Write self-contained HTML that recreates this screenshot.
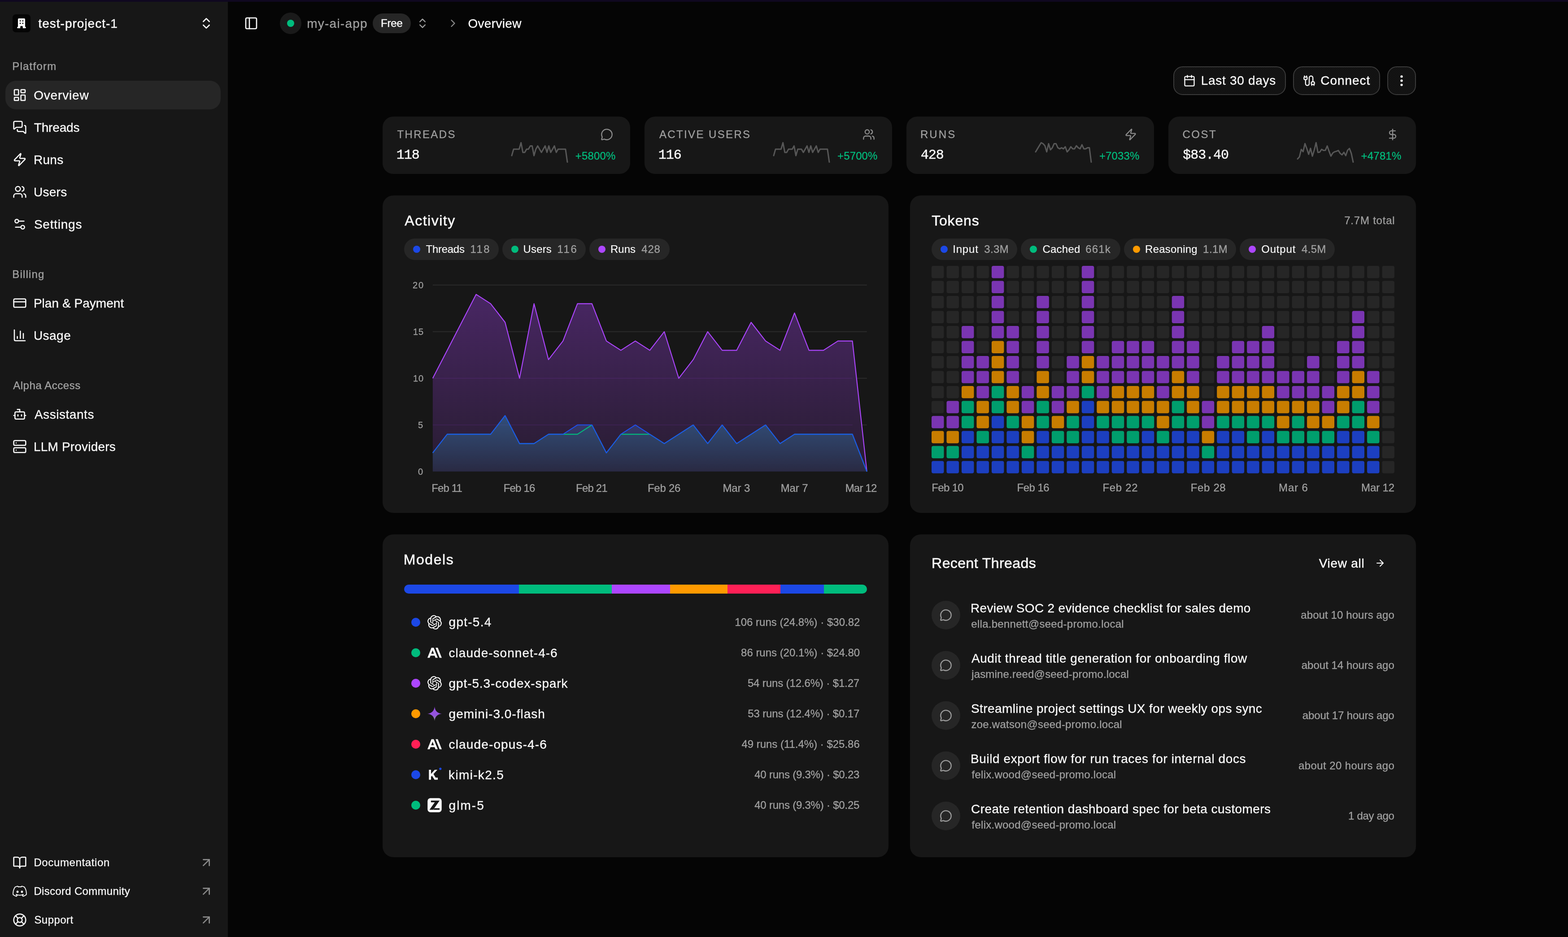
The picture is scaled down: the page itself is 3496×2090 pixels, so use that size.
<!DOCTYPE html><html lang="en"><head><meta charset="utf-8"><title>Overview</title><style>
*{box-sizing:border-box;margin:0;padding:0}
html,body{width:3496px;height:2090px;overflow:hidden;background:#050505}
body{font-family:"Liberation Sans",sans-serif;color:#fafafa;-webkit-font-smoothing:antialiased}
#root{position:absolute;left:0;top:0;width:1748px;height:1045px;zoom:2;overflow:hidden;will-change:transform}
@media (max-width:2400px){html,body{width:1748px;height:1045px}#root{zoom:1}}
.abs{position:absolute}
.ic{display:block;flex:none}
.strip{position:absolute;left:0;top:0;width:1748px;height:2px;background:#0f0820;z-index:5}
.sb{position:absolute;left:0;top:0;width:254px;height:1045px;background:#171717}
.t{position:absolute;white-space:pre;line-height:1}
.c{transform:translateY(-50%)}
.nav{position:absolute;left:6px;width:240px;height:32px;border-radius:12px}
.nav.on{background:#262626}
.card{position:absolute;background:#171717;border-radius:12px}
.btn{position:absolute;top:74.1px;height:31.900px;border:1px solid #3a3a3a;background-color:#171717;border-radius:10.5px;background-image:radial-gradient(circle at .5px .5px,rgba(0,0,0,.5) .3px,transparent .55px),radial-gradient(circle at 1.5px 1.5px,rgba(0,0,0,.5) .3px,transparent .55px);background-size:2px 2px}
.pill{position:absolute;height:24px;border-radius:12px;background:#262626}
.dot{position:absolute;border-radius:50%}
.av{position:absolute;width:32px;height:32px;border-radius:50%;background:#262626}
</style></head><body><div id="root"><div class="strip"></div><aside class="sb"><div class="abs" style="left:14px;top:16px;width:20px;height:20px;border-radius:3.600px;background:#050505"><svg class="ic" width="20" height="20" viewBox="0 0 20 20"><path fill="#fafafa" fill-rule="evenodd" d="M7.100 4.500h5.800a1.100 1.100 0 0 1 1.100 1.100v8.300h.1a.8.800 0 0 1 0 1.650h-2.700v-1.700a.9.900 0 0 0-.9-.9h-1a.9.900 0 0 0-.9.900v1.700H5.900a.8.800 0 0 1 0-1.650H6V5.600a1.100 1.100 0 0 1 1.100-1.100ZM8.200 6.600a.3.300 0 0 0-.3.300v.65a.3.300 0 0 0 .3.300h.75a.3.300 0 0 0 .3-.3V6.900a.3.300 0 0 0-.3-.3Zm2.850 0a.3.300 0 0 0-.3.300v.65a.3.300 0 0 0 .3.300h.75a.3.300 0 0 0 .3-.3V6.900a.3.300 0 0 0-.3-.3ZM8.200 9.400a.3.300 0 0 0-.3.300v.65a.3.300 0 0 0 .3.300h.75a.3.300 0 0 0 .3-.3V9.700a.3.300 0 0 0-.3-.3Zm2.850 0a.3.300 0 0 0-.3.300v.65a.3.300 0 0 0 .3.300h.75a.3.300 0 0 0 .3-.3V9.700a.3.300 0 0 0-.3-.3Z"/></svg></div><div class="t c" style="left:42.70px;top:26.40px;font-size:14px;letter-spacing:0.504px;-webkit-text-stroke:0.25px #fafafa;">test-project-1</div><div class="abs" style="left:222.20px;top:18.00px;"><svg class="ic" width="16" height="16" viewBox="0 0 24 24" fill="none" stroke="currentColor" stroke-width="2" stroke-linecap="round" stroke-linejoin="round" style=""><path d="m7 15 5 5 5-5"/><path d="m7 9 5-5 5 5"/></svg></div><div class="t c" style="left:13.60px;top:74.20px;font-size:12px;letter-spacing:0.621px;color:#a1a1a1;-webkit-text-stroke:0.2px #a1a1a1;">Platform</div><div class="nav on" style="top:90px"><div class="abs" style="left:8.00px;top:8.00px;"><svg class="ic" width="16" height="16" viewBox="0 0 24 24" fill="none" stroke="currentColor" stroke-width="1.9" stroke-linecap="round" stroke-linejoin="round" style=""><rect width="7" height="9" x="3" y="3" rx="1"/><rect width="7" height="5" x="14" y="3" rx="1"/><rect width="7" height="9" x="14" y="12" rx="1"/><rect width="7" height="5" x="3" y="16" rx="1"/></svg></div><span class="t c" style="left:31.60px;top:16.30px;font-size:14px;letter-spacing:0.414px;-webkit-text-stroke:0.15px #fafafa;">Overview</span></div><div class="nav" style="top:126px"><div class="abs" style="left:8.00px;top:8.00px;"><svg class="ic" width="16" height="16" viewBox="0 0 24 24" fill="none" stroke="currentColor" stroke-width="1.9" stroke-linecap="round" stroke-linejoin="round" style=""><path d="M16 10a2 2 0 0 1-2 2H6.828a2 2 0 0 0-1.414.586l-2.202 2.202A.71.71 0 0 1 2 14.286V4a2 2 0 0 1 2-2h10a2 2 0 0 1 2 2z"/><path d="M20 9a2 2 0 0 1 2 2v10.286a.71.71 0 0 1-1.212.502l-2.202-2.202A2 2 0 0 0 17.172 19H10a2 2 0 0 1-2-2v-1"/></svg></div><span class="t c" style="left:31.85px;top:16.30px;font-size:14px;letter-spacing:-0.075px;-webkit-text-stroke:0.15px #fafafa;">Threads</span></div><div class="nav" style="top:162px"><div class="abs" style="left:8.00px;top:8.00px;"><svg class="ic" width="16" height="16" viewBox="0 0 24 24" fill="none" stroke="currentColor" stroke-width="1.9" stroke-linecap="round" stroke-linejoin="round" style=""><path d="M4 14a1 1 0 0 1-.78-1.63l9.9-10.2a.5.5 0 0 1 .86.46l-1.92 6.02A1 1 0 0 0 13 10h7a1 1 0 0 1 .78 1.63l-9.9 10.2a.5.5 0 0 1-.86-.46l1.92-6.02A1 1 0 0 0 11 14z"/></svg></div><span class="t c" style="left:31.45px;top:16.30px;font-size:14px;letter-spacing:0.167px;-webkit-text-stroke:0.15px #fafafa;">Runs</span></div><div class="nav" style="top:198px"><div class="abs" style="left:8.00px;top:8.00px;"><svg class="ic" width="16" height="16" viewBox="0 0 24 24" fill="none" stroke="currentColor" stroke-width="1.9" stroke-linecap="round" stroke-linejoin="round" style=""><path d="M16 21v-2a4 4 0 0 0-4-4H6a4 4 0 0 0-4 4v2"/><circle cx="9" cy="7" r="4"/><path d="M22 21v-2a4 4 0 0 0-3-3.87"/><path d="M16 3.13a4 4 0 0 1 0 7.75"/></svg></div><span class="t c" style="left:31.45px;top:16.30px;font-size:14px;letter-spacing:0.150px;-webkit-text-stroke:0.15px #fafafa;">Users</span></div><div class="nav" style="top:234px"><div class="abs" style="left:8.00px;top:8.00px;"><svg class="ic" width="16" height="16" viewBox="0 0 24 24" fill="none" stroke="currentColor" stroke-width="1.9" stroke-linecap="round" stroke-linejoin="round" style=""><path d="M19 7h-9"/><path d="M14 17H5"/><circle cx="17" cy="17" r="3"/><circle cx="7" cy="7" r="3"/></svg></div><span class="t c" style="left:31.95px;top:16.30px;font-size:14px;letter-spacing:0.386px;-webkit-text-stroke:0.15px #fafafa;">Settings</span></div><div class="t c" style="left:13.60px;top:306.20px;font-size:12px;letter-spacing:0.600px;color:#a1a1a1;-webkit-text-stroke:0.2px #a1a1a1;">Billing</div><div class="nav" style="top:322px"><div class="abs" style="left:8.00px;top:8.00px;"><svg class="ic" width="16" height="16" viewBox="0 0 24 24" fill="none" stroke="currentColor" stroke-width="1.9" stroke-linecap="round" stroke-linejoin="round" style=""><rect width="20" height="14" x="2" y="5" rx="2"/><line x1="2" x2="22" y1="10" y2="10"/></svg></div><span class="t c" style="left:31.45px;top:16.30px;font-size:14px;letter-spacing:0.019px;-webkit-text-stroke:0.15px #fafafa;">Plan &amp; Payment</span></div><div class="nav" style="top:358px"><div class="abs" style="left:8.00px;top:8.00px;"><svg class="ic" width="16" height="16" viewBox="0 0 24 24" fill="none" stroke="currentColor" stroke-width="1.9" stroke-linecap="round" stroke-linejoin="round" style=""><path d="M3 3v16a2 2 0 0 0 2 2h16"/><path d="M18 17V9"/><path d="M13 17V5"/><path d="M8 17v-3"/></svg></div><span class="t c" style="left:31.45px;top:16.30px;font-size:14px;letter-spacing:0.238px;-webkit-text-stroke:0.15px #fafafa;">Usage</span></div><div class="t c" style="left:14.60px;top:430.20px;font-size:12px;letter-spacing:0.273px;color:#a1a1a1;-webkit-text-stroke:0.2px #a1a1a1;">Alpha Access</div><div class="nav" style="top:446px"><div class="abs" style="left:8.00px;top:8.00px;"><svg class="ic" width="16" height="16" viewBox="0 0 24 24" fill="none" stroke="currentColor" stroke-width="1.9" stroke-linecap="round" stroke-linejoin="round" style=""><path d="M12 8V4H8"/><rect width="16" height="12" x="4" y="8" rx="2"/><path d="M2 14h2"/><path d="M20 14h2"/><path d="M15 13v2"/><path d="M9 13v2"/></svg></div><span class="t c" style="left:32.45px;top:16.30px;font-size:14px;letter-spacing:0.272px;-webkit-text-stroke:0.15px #fafafa;">Assistants</span></div><div class="nav" style="top:482px"><div class="abs" style="left:8.00px;top:8.00px;"><svg class="ic" width="16" height="16" viewBox="0 0 24 24" fill="none" stroke="currentColor" stroke-width="1.9" stroke-linecap="round" stroke-linejoin="round" style=""><rect width="20" height="8" x="2" y="2" rx="2" ry="2"/><rect width="20" height="8" x="2" y="14" rx="2" ry="2"/><line x1="6" x2="6.01" y1="6" y2="6"/><line x1="6" x2="6.01" y1="18" y2="18"/></svg></div><span class="t c" style="left:31.45px;top:16.30px;font-size:14px;letter-spacing:0.096px;-webkit-text-stroke:0.15px #fafafa;">LLM Providers</span></div><div class="nav" style="top:946.2px"><div class="abs" style="left:8.00px;top:8.00px;"><svg class="ic" width="16" height="16" viewBox="0 0 24 24" fill="none" stroke="currentColor" stroke-width="1.9" stroke-linecap="round" stroke-linejoin="round" style=""><path d="M12 7v14"/><path d="M3 18a1 1 0 0 1-1-1V4a1 1 0 0 1 1-1h5a4 4 0 0 1 4 4 4 4 0 0 1 4-4h5a1 1 0 0 1 1 1v13a1 1 0 0 1-1 1h-6a3 3 0 0 0-3 3 3 3 0 0 0-3-3z"/></svg></div><span class="t c" style="left:31.70px;top:15.70px;font-size:12px;letter-spacing:0.312px;-webkit-text-stroke:0.15px #fafafa;">Documentation</span><div class="abs" style="left:216.20px;top:7.90px;color:#8a8a8a;"><svg class="ic" width="16" height="16" viewBox="0 0 24 24" fill="none" stroke="currentColor" stroke-width="2" stroke-linecap="round" stroke-linejoin="round" style=""><path d="M7 7h10v10"/><path d="M7 17 17 7"/></svg></div></div><div class="nav" style="top:978.2px"><div class="abs" style="left:8.00px;top:8.00px;"><svg class="ic" width="16" height="16" viewBox="0 0 24 24" fill="none" stroke="currentColor" stroke-width="1.9" stroke-linecap="round" stroke-linejoin="round" style=""><g transform="translate(12 12) scale(.93) translate(-12 -12)"><path stroke-width="1.500" d="M20.317 4.3698a19.7913 19.7913 0 00-4.8851-1.5152.0741.0741 0 00-.0785.0371c-.211.3753-.4447.8648-.6083 1.2495-1.8447-.2762-3.68-.2762-5.4868 0-.1636-.3933-.4058-.8742-.6177-1.2495a.077.077 0 00-.0785-.037 19.7363 19.7363 0 00-4.8852 1.515.0699.0699 0 00-.0321.0277C.5334 9.0458-.319 13.5799.0992 18.0578a.0824.0824 0 00.0312.0561c2.0528 1.5076 4.0413 2.4228 5.9929 3.0294a.0777.0777 0 00.0842-.0276c.4616-.6304.8731-1.2952 1.226-1.9942a.076.076 0 00-.0416-.1057c-.6528-.2476-1.2743-.5495-1.8722-.8923a.077.077 0 01-.0076-.1277c.1258-.0943.2517-.1923.3718-.2914a.0743.0743 0 01.0776-.0105c3.9278 1.7933 8.18 1.7933 12.0614 0a.0739.0739 0 01.0785.0095c.1202.099.246.1981.3728.2924a.077.077 0 01-.0066.1276 12.2986 12.2986 0 01-1.873.8914.0766.0766 0 00-.0407.1067c.3604.698.7719 1.3628 1.225 1.9932a.076.076 0 00.0842.0286c1.961-.6067 3.9495-1.5219 6.0023-3.0294a.077.077 0 00.0313-.0552c.5004-5.177-.8382-9.6739-3.5485-13.6604a.061.061 0 00-.0312-.0286z"/><ellipse cx="8.020" cy="12.900" rx="1.900" ry="2.100" fill="currentColor" stroke="none"/><ellipse cx="15.980" cy="12.900" rx="1.900" ry="2.100" fill="currentColor" stroke="none"/></g></svg></div><span class="t c" style="left:31.70px;top:15.70px;font-size:12px;letter-spacing:0.156px;-webkit-text-stroke:0.15px #fafafa;">Discord Community</span><div class="abs" style="left:216.20px;top:7.90px;color:#8a8a8a;"><svg class="ic" width="16" height="16" viewBox="0 0 24 24" fill="none" stroke="currentColor" stroke-width="2" stroke-linecap="round" stroke-linejoin="round" style=""><path d="M7 7h10v10"/><path d="M7 17 17 7"/></svg></div></div><div class="nav" style="top:1010.2px"><div class="abs" style="left:8.00px;top:8.00px;"><svg class="ic" width="16" height="16" viewBox="0 0 24 24" fill="none" stroke="currentColor" stroke-width="1.9" stroke-linecap="round" stroke-linejoin="round" style=""><circle cx="12" cy="12" r="10"/><path d="m4.93 4.93 4.24 4.24"/><path d="m14.83 9.17 4.24-4.24"/><path d="m14.83 14.83 4.24 4.24"/><path d="m9.17 14.83-4.24 4.24"/><circle cx="12" cy="12" r="4"/></svg></div><span class="t c" style="left:32.20px;top:15.70px;font-size:12px;letter-spacing:0.225px;-webkit-text-stroke:0.15px #fafafa;">Support</span><div class="abs" style="left:216.20px;top:7.90px;color:#8a8a8a;"><svg class="ic" width="16" height="16" viewBox="0 0 24 24" fill="none" stroke="currentColor" stroke-width="2" stroke-linecap="round" stroke-linejoin="round" style=""><path d="M7 7h10v10"/><path d="M7 17 17 7"/></svg></div></div></aside><div class="abs" style="left:272.00px;top:18.00px;"><svg class="ic" width="16" height="16" viewBox="0 0 24 24" fill="none" stroke="currentColor" stroke-width="2" stroke-linecap="round" stroke-linejoin="round" style=""><rect width="18" height="18" x="3" y="3" rx="2"/><path d="M9 3v18"/></svg></div><div class="abs" style="left:312px;top:14px;width:24px;height:24px;border-radius:50%;background:#1a1a1a"><div class="dot" style="left:8px;top:8px;width:8px;height:8px;background:#00bc7d"></div></div><div class="t c" style="left:342.15px;top:26.40px;font-size:14px;letter-spacing:0.613px;color:#a1a1a1;-webkit-text-stroke:0.15px #a1a1a1;">my-ai-app</div><div class="abs" style="left:415.5px;top:15px;width:42.5px;height:22px;border-radius:11px;background:#262626"><div class="t c" style="left:8.95px;top:11.20px;font-size:12px;letter-spacing:-0.083px;-webkit-text-stroke:0.22px #fafafa;">Free</div></div><div class="abs" style="left:464.00px;top:19.00px;color:#a1a1a1;"><svg class="ic" width="14" height="14" viewBox="0 0 24 24" fill="none" stroke="currentColor" stroke-width="2" stroke-linecap="round" stroke-linejoin="round" style=""><path d="m7 15 5 5 5-5"/><path d="m7 9 5-5 5 5"/></svg></div><div class="abs" style="left:498.00px;top:19.00px;color:#8a8a8a;"><svg class="ic" width="14" height="14" viewBox="0 0 24 24" fill="none" stroke="currentColor" stroke-width="2" stroke-linecap="round" stroke-linejoin="round" style=""><path d="m9 18 6-6-6-6"/></svg></div><div class="t c" style="left:521.70px;top:26.40px;font-size:14px;letter-spacing:0.171px;-webkit-text-stroke:0.15px #fafafa;">Overview</div><div class="btn" style="left:1308px;width:125.4px"><div class="abs" style="left:9.90px;top:7.80px;"><svg class="ic" width="14" height="14" viewBox="0 0 24 24" fill="none" stroke="currentColor" stroke-width="2" stroke-linecap="round" stroke-linejoin="round" style=""><path d="M8 2v4"/><path d="M16 2v4"/><rect width="18" height="18" x="3" y="4" rx="2"/><path d="M3 10h18"/></svg></div><div class="t c" style="left:29.90px;top:15.00px;font-size:14px;letter-spacing:0.350px;-webkit-text-stroke:0.15px #fafafa;">Last 30 days</div></div><div class="btn" style="left:1441.7px;width:96.6px"><div class="abs" style="left:9.70px;top:7.80px;"><svg class="ic" width="14" height="14" viewBox="0 0 24 24" fill="none" stroke="currentColor" stroke-width="2" stroke-linecap="round" stroke-linejoin="round" style=""><path d="M17 19a1 1 0 0 1-1-1v-2a2 2 0 0 1 2-2h2a2 2 0 0 1 2 2v2a1 1 0 0 1-1 1z"/><path d="M17 21v-2"/><path d="M19 14V6.5a1 1 0 0 0-7 0v11a1 1 0 0 1-7 0V10"/><path d="M21 21v-2"/><path d="M3 5V3"/><path d="M4 10a2 2 0 0 1-2-2V6a1 1 0 0 1 1-1h4a1 1 0 0 1 1 1v2a2 2 0 0 1-2 2z"/><path d="M7 5V3"/></svg></div><div class="t c" style="left:29.45px;top:15.00px;font-size:14px;letter-spacing:0.467px;-webkit-text-stroke:0.22px #fafafa;">Connect</div></div><div class="btn" style="left:1546.5px;width:32px"><div class="abs" style="left:6.85px;top:6.80px;"><svg class="ic" width="16" height="16" viewBox="0 0 24 24" fill="none" stroke="currentColor" stroke-width="2" stroke-linecap="round" stroke-linejoin="round" style=""><circle cx="12" cy="12" r="1"/><circle cx="12" cy="5" r="1"/><circle cx="12" cy="19" r="1"/></svg></div></div><div class="card" style="left:426.5px;top:130px;width:276px;height:64px"><div class="t c" style="left:16.20px;top:20.00px;font-size:12px;letter-spacing:1.200px;color:#a1a1a1;-webkit-text-stroke:0.15px #a1a1a1;">THREADS</div><div class="t c" style="left:15.40px;top:43.10px;font-size:15px;letter-spacing:-0.525px;font-family:'Liberation Mono',monospace;-webkit-text-stroke:0.2px #fafafa;">118</div><svg class="abs" style="left:143.2px;top:28px" width="64" height="24" viewBox="0 0 64 24"><polyline fill="none" stroke="#575757" stroke-width="1.500" stroke-linejoin="round" stroke-linecap="round" points="1.00,15.57 3.07,8.33 5.13,8.33 7.20,8.33 9.27,8.33 11.33,1.10 13.40,11.95 15.47,11.95 17.53,8.33 19.60,8.33 21.67,4.72 23.73,4.72 25.80,15.57 27.87,8.33 29.93,4.72 32.00,8.33 34.07,11.95 36.13,8.33 38.20,4.72 40.27,11.95 42.33,4.72 44.40,11.95 46.47,8.33 48.53,4.72 50.60,11.95 52.67,8.33 54.73,8.33 56.80,8.33 58.87,8.33 60.93,8.33 63.00,22.80"/></svg><div class="t c" style="left:214.85px;top:44.00px;font-size:12px;letter-spacing:0.100px;color:#00bc7d;-webkit-text-stroke:0.15px #00bc7d;">+5800%</div><div class="abs" style="left:242.80px;top:13.10px;color:#8c8c8c;"><svg class="ic" width="14" height="14" viewBox="0 0 24 24" fill="none" stroke="currentColor" stroke-width="2" stroke-linecap="round" stroke-linejoin="round" style=""><path d="M2.992 16.342a2 2 0 0 1 .094 1.167l-1.065 3.29a1 1 0 0 0 1.236 1.168l3.413-.998a2 2 0 0 1 1.099.092 10 10 0 1 0-4.777-4.719"/></svg></div></div><div class="card" style="left:718.5px;top:130px;width:276px;height:64px"><div class="t c" style="left:16.45px;top:20.00px;font-size:12px;letter-spacing:1.191px;color:#a1a1a1;-webkit-text-stroke:0.15px #a1a1a1;">ACTIVE USERS</div><div class="t c" style="left:15.40px;top:43.10px;font-size:15px;letter-spacing:-0.525px;font-family:'Liberation Mono',monospace;-webkit-text-stroke:0.2px #fafafa;">116</div><svg class="abs" style="left:143.2px;top:28px" width="64" height="24" viewBox="0 0 64 24"><polyline fill="none" stroke="#575757" stroke-width="1.500" stroke-linejoin="round" stroke-linecap="round" points="1.00,15.57 3.07,8.33 5.13,8.33 7.20,8.33 9.27,8.33 11.33,1.10 13.40,11.95 15.47,11.95 17.53,8.33 19.60,8.33 21.67,8.33 23.73,4.72 25.80,15.57 27.87,8.33 29.93,8.33 32.00,8.33 34.07,11.95 36.13,8.33 38.20,4.72 40.27,11.95 42.33,4.72 44.40,11.95 46.47,8.33 48.53,4.72 50.60,11.95 52.67,8.33 54.73,8.33 56.80,8.33 58.87,8.33 60.93,8.33 63.00,22.80"/></svg><div class="t c" style="left:215.00px;top:44.00px;font-size:12px;letter-spacing:0.070px;color:#00bc7d;-webkit-text-stroke:0.15px #00bc7d;">+5700%</div><div class="abs" style="left:242.80px;top:13.10px;color:#8c8c8c;"><svg class="ic" width="14" height="14" viewBox="0 0 24 24" fill="none" stroke="currentColor" stroke-width="2" stroke-linecap="round" stroke-linejoin="round" style=""><path d="M16 21v-2a4 4 0 0 0-4-4H6a4 4 0 0 0-4 4v2"/><circle cx="9" cy="7" r="4"/><path d="M22 21v-2a4 4 0 0 0-3-3.87"/><path d="M16 3.13a4 4 0 0 1 0 7.75"/></svg></div></div><div class="card" style="left:1010.5px;top:130px;width:276px;height:64px"><div class="t c" style="left:15.45px;top:20.00px;font-size:12px;letter-spacing:1.567px;color:#a1a1a1;-webkit-text-stroke:0.15px #a1a1a1;">RUNS</div><div class="t c" style="left:15.90px;top:43.10px;font-size:15px;letter-spacing:-0.525px;font-family:'Liberation Mono',monospace;-webkit-text-stroke:0.2px #fafafa;">428</div><svg class="abs" style="left:143.2px;top:28px" width="64" height="24" viewBox="0 0 64 24"><polyline fill="none" stroke="#575757" stroke-width="1.500" stroke-linejoin="round" stroke-linecap="round" points="1.00,11.38 3.07,7.95 5.13,4.53 7.20,1.10 9.27,2.24 11.33,4.53 13.40,11.38 15.47,2.24 17.53,9.09 19.60,6.81 21.67,2.24 23.73,2.24 25.80,6.81 27.87,7.95 29.93,6.81 32.00,7.95 34.07,5.67 36.13,11.38 38.20,9.09 40.27,5.67 42.33,7.95 44.40,7.95 46.47,4.53 48.53,6.81 50.60,7.95 52.67,3.38 54.73,7.95 56.80,7.95 58.87,6.81 60.93,6.81 63.00,22.80"/></svg><div class="t c" style="left:214.95px;top:44.00px;font-size:12px;letter-spacing:0.080px;color:#00bc7d;-webkit-text-stroke:0.15px #00bc7d;">+7033%</div><div class="abs" style="left:242.80px;top:13.10px;color:#8c8c8c;"><svg class="ic" width="14" height="14" viewBox="0 0 24 24" fill="none" stroke="currentColor" stroke-width="2" stroke-linecap="round" stroke-linejoin="round" style=""><path d="M4 14a1 1 0 0 1-.78-1.63l9.9-10.2a.5.5 0 0 1 .86.46l-1.92 6.02A1 1 0 0 0 13 10h7a1 1 0 0 1 .78 1.63l-9.9 10.2a.5.5 0 0 1-.86-.46l1.92-6.02A1 1 0 0 0 11 14z"/></svg></div></div><div class="card" style="left:1302.5px;top:130px;width:276px;height:64px"><div class="t c" style="left:15.70px;top:20.00px;font-size:12px;letter-spacing:1.250px;color:#a1a1a1;-webkit-text-stroke:0.15px #a1a1a1;">COST</div><div class="t c" style="left:16.15px;top:43.10px;font-size:15px;letter-spacing:-0.525px;font-family:'Liberation Mono',monospace;-webkit-text-stroke:0.2px #fafafa;">$83.40</div><svg class="abs" style="left:143.2px;top:28px" width="64" height="24" viewBox="0 0 64 24"><polyline fill="none" stroke="#575757" stroke-width="1.500" stroke-linejoin="round" stroke-linecap="round" points="1.00,19.26 3.07,17.04 5.13,8.63 7.20,11.14 9.27,2.13 11.33,7.74 13.40,14.09 15.47,7.45 17.53,16.16 19.60,9.51 21.67,1.10 23.73,12.02 25.80,11.58 27.87,8.48 29.93,9.81 32.00,9.66 34.07,4.79 36.13,10.70 38.20,16.16 40.27,12.61 42.33,11.29 44.40,10.70 46.47,9.81 48.53,13.06 50.60,14.68 52.67,11.88 54.73,15.57 56.80,9.51 58.87,7.60 60.93,13.06 63.00,22.80"/></svg><div class="t c" style="left:214.75px;top:44.00px;font-size:12px;letter-spacing:0.120px;color:#00bc7d;-webkit-text-stroke:0.15px #00bc7d;">+4781%</div><div class="abs" style="left:242.80px;top:13.10px;color:#8c8c8c;"><svg class="ic" width="14" height="14" viewBox="0 0 24 24" fill="none" stroke="currentColor" stroke-width="2" stroke-linecap="round" stroke-linejoin="round" style=""><line x1="12" x2="12" y1="2" y2="22"/><path d="M17 5H9.5a3.5 3.5 0 0 0 0 7h5a3.5 3.5 0 0 1 0 7H6"/></svg></div></div><div class="card" style="left:426.5px;top:218px;width:564px;height:353.800px"><div class="t c" style="left:24.65px;top:28.20px;font-size:16px;letter-spacing:0.750px;-webkit-text-stroke:0.27px #fafafa;">Activity</div><div class="pill" style="left:24.00px;top:48.00px;width:105.50px"><div class="dot" style="left:10.10px;top:8px;width:8px;height:8px;background:#1c48e6"></div><div class="t c" style="left:24.30px;top:12.20px;font-size:12px;letter-spacing:-0.142px;-webkit-text-stroke:0.08px #fafafa;">Threads</div><div class="t c" style="left:73.75px;top:12.20px;font-size:12px;letter-spacing:1.200px;color:#a1a1a1;-webkit-text-stroke:0.15px #a1a1a1;">118</div></div><div class="pill" style="left:133.60px;top:48.00px;width:92.80px"><div class="dot" style="left:10.00px;top:8px;width:8px;height:8px;background:#00bc7d"></div><div class="t c" style="left:23.15px;top:12.20px;font-size:12px;letter-spacing:0.088px;-webkit-text-stroke:0.08px #fafafa;">Users</div><div class="t c" style="left:61.15px;top:12.20px;font-size:12px;letter-spacing:1.275px;color:#a1a1a1;-webkit-text-stroke:0.15px #a1a1a1;">116</div></div><div class="pill" style="left:230.40px;top:48.00px;width:89.60px"><div class="dot" style="left:10.10px;top:8px;width:8px;height:8px;background:#ad46ff"></div><div class="t c" style="left:23.55px;top:12.20px;font-size:12px;letter-spacing:0.033px;-webkit-text-stroke:0.08px #fafafa;">Runs</div><div class="t c" style="left:58.20px;top:12.20px;font-size:12px;letter-spacing:0.425px;color:#a1a1a1;-webkit-text-stroke:0.15px #a1a1a1;">428</div></div><svg class="abs" style="left:0;top:0" width="564" height="354" viewBox="0 0 564 354"><defs><linearGradient id="gp" x1="0" y1="0" x2="0" y2="1"><stop offset="0" stop-color="#ad46ff" stop-opacity="0.33"/><stop offset="1" stop-color="#ad46ff" stop-opacity="0.11"/></linearGradient><linearGradient id="gg" x1="0" y1="0" x2="0" y2="1"><stop offset="0" stop-color="#00bc7d" stop-opacity="0.16"/><stop offset="1" stop-color="#00bc7d" stop-opacity="0.03"/></linearGradient><linearGradient id="gb" x1="0" y1="0" x2="0" y2="1"><stop offset="0" stop-color="#4480e6" stop-opacity="0.3"/><stop offset="1" stop-color="#4480e6" stop-opacity="0.09"/></linearGradient></defs><line x1="55.90" x2="539.90" y1="255.90" y2="255.90" stroke="#2b2b2b" stroke-width="1"/><line x1="55.90" x2="539.90" y1="203.90" y2="203.90" stroke="#2b2b2b" stroke-width="1"/><line x1="55.90" x2="539.90" y1="151.90" y2="151.90" stroke="#2b2b2b" stroke-width="1"/><line x1="55.90" x2="539.90" y1="99.90" y2="99.90" stroke="#2b2b2b" stroke-width="1"/><path d="M55.90 203.90 L72.03 172.70 L88.17 141.50 L104.30 110.30 L120.43 120.70 L136.57 141.50 L152.70 203.90 L168.83 120.70 L184.97 183.10 L201.10 162.30 L217.23 120.70 L233.37 120.70 L249.50 162.30 L265.63 172.70 L281.77 162.30 L297.90 172.70 L314.03 151.90 L330.17 203.90 L346.30 183.10 L362.43 151.90 L378.57 172.70 L394.70 172.70 L410.83 141.50 L426.97 162.30 L443.10 172.70 L459.23 131.10 L475.37 172.70 L491.50 172.70 L507.63 162.30 L523.77 162.30 L539.90 307.90 L539.90 307.90 L55.90 307.90 Z" fill="#171717"/><path d="M55.90 203.90 L72.03 172.70 L88.17 141.50 L104.30 110.30 L120.43 120.70 L136.57 141.50 L152.70 203.90 L168.83 120.70 L184.97 183.10 L201.10 162.30 L217.23 120.70 L233.37 120.70 L249.50 162.30 L265.63 172.70 L281.77 162.30 L297.90 172.70 L314.03 151.90 L330.17 203.90 L346.30 183.10 L362.43 151.90 L378.57 172.70 L394.70 172.70 L410.83 141.50 L426.97 162.30 L443.10 172.70 L459.23 131.10 L475.37 172.70 L491.50 172.70 L507.63 162.30 L523.77 162.30 L539.90 307.90 L539.90 307.90 L55.90 307.90 Z" fill="url(#gp)"/><line x1="55.90" x2="523.90" y1="255.90" y2="255.90" stroke="#ad46ff" stroke-opacity=".10" stroke-width="1"/><line x1="55.90" x2="523.90" y1="203.90" y2="203.90" stroke="#ad46ff" stroke-opacity=".10" stroke-width="1"/><path d="M55.90 287.10 L72.03 266.30 L88.17 266.30 L104.30 266.30 L120.43 266.30 L136.57 245.50 L152.70 276.70 L168.83 276.70 L184.97 266.30 L201.10 266.30 L217.23 266.30 L233.37 255.90 L249.50 287.10 L265.63 266.30 L281.77 266.30 L297.90 266.30 L314.03 276.70 L330.17 266.30 L346.30 255.90 L362.43 276.70 L378.57 255.90 L394.70 276.70 L410.83 266.30 L426.97 255.90 L443.10 276.70 L459.23 266.30 L475.37 266.30 L491.50 266.30 L507.63 266.30 L523.77 266.30 L539.90 307.90 L539.90 307.90 L55.90 307.90 Z" fill="url(#gg)"/><path d="M55.90 287.10 L72.03 266.30 L88.17 266.30 L104.30 266.30 L120.43 266.30 L136.57 245.50 L152.70 276.70 L168.83 276.70 L184.97 266.30 L201.10 266.30 L217.23 255.90 L233.37 255.90 L249.50 287.10 L265.63 266.30 L281.77 255.90 L297.90 266.30 L314.03 276.70 L330.17 266.30 L346.30 255.90 L362.43 276.70 L378.57 255.90 L394.70 276.70 L410.83 266.30 L426.97 255.90 L443.10 276.70 L459.23 266.30 L475.37 266.30 L491.50 266.30 L507.63 266.30 L523.77 266.30 L539.90 307.90 L539.90 307.90 L55.90 307.90 Z" fill="url(#gb)"/><path d="M55.90 203.90 L72.03 172.70 L88.17 141.50 L104.30 110.30 L120.43 120.70 L136.57 141.50 L152.70 203.90 L168.83 120.70 L184.97 183.10 L201.10 162.30 L217.23 120.70 L233.37 120.70 L249.50 162.30 L265.63 172.70 L281.77 162.30 L297.90 172.70 L314.03 151.90 L330.17 203.90 L346.30 183.10 L362.43 151.90 L378.57 172.70 L394.70 172.70 L410.83 141.50 L426.97 162.30 L443.10 172.70 L459.23 131.10 L475.37 172.70 L491.50 172.70 L507.63 162.30 L523.77 162.30 L539.90 307.90" fill="none" stroke="#ad46ff" stroke-width="1.05" stroke-linejoin="round"/><path d="M55.90 287.10 L72.03 266.30 L88.17 266.30 L104.30 266.30 L120.43 266.30 L136.57 245.50 L152.70 276.70 L168.83 276.70 L184.97 266.30 L201.10 266.30 L217.23 266.30 L233.37 255.90 L249.50 287.10 L265.63 266.30 L281.77 266.30 L297.90 266.30 L314.03 276.70 L330.17 266.30 L346.30 255.90 L362.43 276.70 L378.57 255.90 L394.70 276.70 L410.83 266.30 L426.97 255.90 L443.10 276.70 L459.23 266.30 L475.37 266.30 L491.50 266.30 L507.63 266.30 L523.77 266.30 L539.90 307.90" fill="none" stroke="#00bc7d" stroke-width="1.05" stroke-linejoin="round"/><path d="M55.90 287.10 L72.03 266.30 L88.17 266.30 L104.30 266.30 L120.43 266.30 L136.57 245.50 L152.70 276.70 L168.83 276.70 L184.97 266.30 L201.10 266.30 L217.23 255.90 L233.37 255.90 L249.50 287.10 L265.63 266.30 L281.77 255.90 L297.90 266.30 L314.03 276.70 L330.17 266.30 L346.30 255.90 L362.43 276.70 L378.57 255.90 L394.70 276.70 L410.83 266.30 L426.97 255.90 L443.10 276.70 L459.23 266.30 L475.37 266.30 L491.50 266.30 L507.63 266.30 L523.77 266.30 L539.90 307.90" fill="none" stroke="#1f4fec" stroke-width="1.05" stroke-linejoin="round"/></svg><div class="t c" style="left:39.55px;top:308.00px;font-size:10px;letter-spacing:0.450px;color:#a1a1a1;-webkit-text-stroke:0.15px #a1a1a1;">0</div><div class="t c" style="left:39.55px;top:256.00px;font-size:10px;letter-spacing:0.450px;color:#a1a1a1;-webkit-text-stroke:0.15px #a1a1a1;">5</div><div class="t c" style="left:34.00px;top:204.00px;font-size:10px;letter-spacing:0.500px;color:#a1a1a1;-webkit-text-stroke:0.15px #a1a1a1;">10</div><div class="t c" style="left:34.00px;top:152.00px;font-size:10px;letter-spacing:0.500px;color:#a1a1a1;-webkit-text-stroke:0.15px #a1a1a1;">15</div><div class="t c" style="left:33.45px;top:100.00px;font-size:10px;letter-spacing:1.050px;color:#a1a1a1;-webkit-text-stroke:0.15px #a1a1a1;">20</div><div class="t c" style="left:54.58px;top:326.50px;font-size:12px;letter-spacing:-0.420px;color:#a1a1a1;-webkit-text-stroke:0.15px #a1a1a1;">Feb 11</div><div class="t c" style="left:134.88px;top:326.50px;font-size:12px;letter-spacing:-0.420px;color:#a1a1a1;-webkit-text-stroke:0.15px #a1a1a1;">Feb 16</div><div class="t c" style="left:215.54px;top:326.50px;font-size:12px;letter-spacing:-0.420px;color:#a1a1a1;-webkit-text-stroke:0.15px #a1a1a1;">Feb 21</div><div class="t c" style="left:295.48px;top:326.50px;font-size:12px;letter-spacing:-0.130px;color:#a1a1a1;-webkit-text-stroke:0.15px #a1a1a1;">Feb 26</div><div class="t c" style="left:379.20px;top:326.50px;font-size:12px;letter-spacing:-0.062px;color:#a1a1a1;-webkit-text-stroke:0.15px #a1a1a1;">Mar 3</div><div class="t c" style="left:443.83px;top:326.50px;font-size:12px;letter-spacing:-0.050px;color:#a1a1a1;-webkit-text-stroke:0.15px #a1a1a1;">Mar 7</div><div class="t c" style="left:515.85px;top:326.50px;font-size:12px;letter-spacing:-0.410px;color:#a1a1a1;-webkit-text-stroke:0.15px #a1a1a1;">Mar 12</div></div><div class="card" style="left:1014.5px;top:218px;width:564px;height:353.800px"><div class="t c" style="left:24.10px;top:28.20px;font-size:16px;letter-spacing:0.410px;-webkit-text-stroke:0.27px #fafafa;">Tokens</div><div class="t c" style="left:484.10px;top:27.90px;font-size:12px;letter-spacing:0.394px;color:#a1a1a1;-webkit-text-stroke:0.15px #a1a1a1;">7.7M total</div><div class="pill" style="left:24.00px;top:48.00px;width:95.50px"><div class="dot" style="left:10.15px;top:8px;width:8px;height:8px;background:#1c48e6"></div><div class="t c" style="left:23.60px;top:12.20px;font-size:12px;letter-spacing:0.413px;-webkit-text-stroke:0.08px #fafafa;">Input</div><div class="t c" style="left:58.65px;top:12.20px;font-size:12px;letter-spacing:0.183px;color:#a1a1a1;-webkit-text-stroke:0.15px #a1a1a1;">3.3M</div></div><div class="pill" style="left:123.50px;top:48.00px;width:110.80px"><div class="dot" style="left:10.00px;top:8px;width:8px;height:8px;background:#00bc7d"></div><div class="t c" style="left:24.20px;top:12.20px;font-size:12px;letter-spacing:0.130px;-webkit-text-stroke:0.08px #fafafa;">Cached</div><div class="t c" style="left:72.10px;top:12.20px;font-size:12px;letter-spacing:0.583px;color:#a1a1a1;-webkit-text-stroke:0.15px #a1a1a1;">661k</div></div><div class="pill" style="left:238.40px;top:48.00px;width:125.10px"><div class="dot" style="left:10.10px;top:8px;width:8px;height:8px;background:#ff9a00"></div><div class="t c" style="left:23.65px;top:12.20px;font-size:12px;letter-spacing:0.113px;-webkit-text-stroke:0.08px #fafafa;">Reasoning</div><div class="t c" style="left:88.15px;top:12.20px;font-size:12px;letter-spacing:0.217px;color:#a1a1a1;-webkit-text-stroke:0.15px #a1a1a1;">1.1M</div></div><div class="pill" style="left:367.60px;top:48.00px;width:105.90px"><div class="dot" style="left:9.90px;top:8px;width:8px;height:8px;background:#ad46ff"></div><div class="t c" style="left:24.00px;top:12.20px;font-size:12px;letter-spacing:0.410px;-webkit-text-stroke:0.08px #fafafa;">Output</div><div class="t c" style="left:68.90px;top:12.20px;font-size:12px;letter-spacing:0.167px;color:#a1a1a1;-webkit-text-stroke:0.15px #a1a1a1;">4.5M</div></div><svg class="abs" style="left:24px;top:78.600px" width="516" height="232" viewBox="0 0 516 232"><g fill="#262626"><rect x="0.00" y="0.00" width="13.74" height="13.74" rx="2"/><rect x="0.00" y="16.74" width="13.74" height="13.74" rx="2"/><rect x="0.00" y="33.48" width="13.74" height="13.74" rx="2"/><rect x="0.00" y="50.23" width="13.74" height="13.74" rx="2"/><rect x="0.00" y="66.97" width="13.74" height="13.74" rx="2"/><rect x="0.00" y="83.71" width="13.74" height="13.74" rx="2"/><rect x="0.00" y="100.45" width="13.74" height="13.74" rx="2"/><rect x="0.00" y="117.19" width="13.74" height="13.74" rx="2"/><rect x="0.00" y="133.94" width="13.74" height="13.74" rx="2"/><rect x="0.00" y="150.68" width="13.74" height="13.74" rx="2"/><rect x="16.74" y="0.00" width="13.74" height="13.74" rx="2"/><rect x="16.74" y="16.74" width="13.74" height="13.74" rx="2"/><rect x="16.74" y="33.48" width="13.74" height="13.74" rx="2"/><rect x="16.74" y="50.23" width="13.74" height="13.74" rx="2"/><rect x="16.74" y="66.97" width="13.74" height="13.74" rx="2"/><rect x="16.74" y="83.71" width="13.74" height="13.74" rx="2"/><rect x="16.74" y="100.45" width="13.74" height="13.74" rx="2"/><rect x="16.74" y="117.19" width="13.74" height="13.74" rx="2"/><rect x="16.74" y="133.94" width="13.74" height="13.74" rx="2"/><rect x="33.48" y="0.00" width="13.74" height="13.74" rx="2"/><rect x="33.48" y="16.74" width="13.74" height="13.74" rx="2"/><rect x="33.48" y="33.48" width="13.74" height="13.74" rx="2"/><rect x="33.48" y="50.23" width="13.74" height="13.74" rx="2"/><rect x="50.23" y="0.00" width="13.74" height="13.74" rx="2"/><rect x="50.23" y="16.74" width="13.74" height="13.74" rx="2"/><rect x="50.23" y="33.48" width="13.74" height="13.74" rx="2"/><rect x="50.23" y="50.23" width="13.74" height="13.74" rx="2"/><rect x="50.23" y="66.97" width="13.74" height="13.74" rx="2"/><rect x="50.23" y="83.71" width="13.74" height="13.74" rx="2"/><rect x="83.71" y="0.00" width="13.74" height="13.74" rx="2"/><rect x="83.71" y="16.74" width="13.74" height="13.74" rx="2"/><rect x="83.71" y="33.48" width="13.74" height="13.74" rx="2"/><rect x="83.71" y="50.23" width="13.74" height="13.74" rx="2"/><rect x="100.45" y="0.00" width="13.74" height="13.74" rx="2"/><rect x="100.45" y="16.74" width="13.74" height="13.74" rx="2"/><rect x="100.45" y="33.48" width="13.74" height="13.74" rx="2"/><rect x="100.45" y="50.23" width="13.74" height="13.74" rx="2"/><rect x="100.45" y="66.97" width="13.74" height="13.74" rx="2"/><rect x="100.45" y="83.71" width="13.74" height="13.74" rx="2"/><rect x="100.45" y="100.45" width="13.74" height="13.74" rx="2"/><rect x="100.45" y="117.19" width="13.74" height="13.74" rx="2"/><rect x="117.19" y="0.00" width="13.74" height="13.74" rx="2"/><rect x="117.19" y="16.74" width="13.74" height="13.74" rx="2"/><rect x="133.94" y="0.00" width="13.74" height="13.74" rx="2"/><rect x="133.94" y="16.74" width="13.74" height="13.74" rx="2"/><rect x="133.94" y="33.48" width="13.74" height="13.74" rx="2"/><rect x="133.94" y="50.23" width="13.74" height="13.74" rx="2"/><rect x="133.94" y="66.97" width="13.74" height="13.74" rx="2"/><rect x="133.94" y="83.71" width="13.74" height="13.74" rx="2"/><rect x="133.94" y="100.45" width="13.74" height="13.74" rx="2"/><rect x="133.94" y="117.19" width="13.74" height="13.74" rx="2"/><rect x="150.68" y="0.00" width="13.74" height="13.74" rx="2"/><rect x="150.68" y="16.74" width="13.74" height="13.74" rx="2"/><rect x="150.68" y="33.48" width="13.74" height="13.74" rx="2"/><rect x="150.68" y="50.23" width="13.74" height="13.74" rx="2"/><rect x="150.68" y="66.97" width="13.74" height="13.74" rx="2"/><rect x="150.68" y="83.71" width="13.74" height="13.74" rx="2"/><rect x="184.16" y="0.00" width="13.74" height="13.74" rx="2"/><rect x="184.16" y="16.74" width="13.74" height="13.74" rx="2"/><rect x="184.16" y="33.48" width="13.74" height="13.74" rx="2"/><rect x="184.16" y="50.23" width="13.74" height="13.74" rx="2"/><rect x="184.16" y="66.97" width="13.74" height="13.74" rx="2"/><rect x="184.16" y="83.71" width="13.74" height="13.74" rx="2"/><rect x="200.90" y="0.00" width="13.74" height="13.74" rx="2"/><rect x="200.90" y="16.74" width="13.74" height="13.74" rx="2"/><rect x="200.90" y="33.48" width="13.74" height="13.74" rx="2"/><rect x="200.90" y="50.23" width="13.74" height="13.74" rx="2"/><rect x="200.90" y="66.97" width="13.74" height="13.74" rx="2"/><rect x="217.65" y="0.00" width="13.74" height="13.74" rx="2"/><rect x="217.65" y="16.74" width="13.74" height="13.74" rx="2"/><rect x="217.65" y="33.48" width="13.74" height="13.74" rx="2"/><rect x="217.65" y="50.23" width="13.74" height="13.74" rx="2"/><rect x="217.65" y="66.97" width="13.74" height="13.74" rx="2"/><rect x="234.39" y="0.00" width="13.74" height="13.74" rx="2"/><rect x="234.39" y="16.74" width="13.74" height="13.74" rx="2"/><rect x="234.39" y="33.48" width="13.74" height="13.74" rx="2"/><rect x="234.39" y="50.23" width="13.74" height="13.74" rx="2"/><rect x="234.39" y="66.97" width="13.74" height="13.74" rx="2"/><rect x="251.13" y="0.00" width="13.74" height="13.74" rx="2"/><rect x="251.13" y="16.74" width="13.74" height="13.74" rx="2"/><rect x="251.13" y="33.48" width="13.74" height="13.74" rx="2"/><rect x="251.13" y="50.23" width="13.74" height="13.74" rx="2"/><rect x="251.13" y="66.97" width="13.74" height="13.74" rx="2"/><rect x="251.13" y="83.71" width="13.74" height="13.74" rx="2"/><rect x="267.87" y="0.00" width="13.74" height="13.74" rx="2"/><rect x="267.87" y="16.74" width="13.74" height="13.74" rx="2"/><rect x="284.61" y="0.00" width="13.74" height="13.74" rx="2"/><rect x="284.61" y="16.74" width="13.74" height="13.74" rx="2"/><rect x="284.61" y="33.48" width="13.74" height="13.74" rx="2"/><rect x="284.61" y="50.23" width="13.74" height="13.74" rx="2"/><rect x="284.61" y="66.97" width="13.74" height="13.74" rx="2"/><rect x="301.35" y="0.00" width="13.74" height="13.74" rx="2"/><rect x="301.35" y="16.74" width="13.74" height="13.74" rx="2"/><rect x="301.35" y="33.48" width="13.74" height="13.74" rx="2"/><rect x="301.35" y="50.23" width="13.74" height="13.74" rx="2"/><rect x="301.35" y="66.97" width="13.74" height="13.74" rx="2"/><rect x="301.35" y="83.71" width="13.74" height="13.74" rx="2"/><rect x="301.35" y="100.45" width="13.74" height="13.74" rx="2"/><rect x="301.35" y="117.19" width="13.74" height="13.74" rx="2"/><rect x="301.35" y="133.94" width="13.74" height="13.74" rx="2"/><rect x="318.10" y="0.00" width="13.74" height="13.74" rx="2"/><rect x="318.10" y="16.74" width="13.74" height="13.74" rx="2"/><rect x="318.10" y="33.48" width="13.74" height="13.74" rx="2"/><rect x="318.10" y="50.23" width="13.74" height="13.74" rx="2"/><rect x="318.10" y="66.97" width="13.74" height="13.74" rx="2"/><rect x="318.10" y="83.71" width="13.74" height="13.74" rx="2"/><rect x="334.84" y="0.00" width="13.74" height="13.74" rx="2"/><rect x="334.84" y="16.74" width="13.74" height="13.74" rx="2"/><rect x="334.84" y="33.48" width="13.74" height="13.74" rx="2"/><rect x="334.84" y="50.23" width="13.74" height="13.74" rx="2"/><rect x="334.84" y="66.97" width="13.74" height="13.74" rx="2"/><rect x="351.58" y="0.00" width="13.74" height="13.74" rx="2"/><rect x="351.58" y="16.74" width="13.74" height="13.74" rx="2"/><rect x="351.58" y="33.48" width="13.74" height="13.74" rx="2"/><rect x="351.58" y="50.23" width="13.74" height="13.74" rx="2"/><rect x="351.58" y="66.97" width="13.74" height="13.74" rx="2"/><rect x="368.32" y="0.00" width="13.74" height="13.74" rx="2"/><rect x="368.32" y="16.74" width="13.74" height="13.74" rx="2"/><rect x="368.32" y="33.48" width="13.74" height="13.74" rx="2"/><rect x="368.32" y="50.23" width="13.74" height="13.74" rx="2"/><rect x="385.06" y="0.00" width="13.74" height="13.74" rx="2"/><rect x="385.06" y="16.74" width="13.74" height="13.74" rx="2"/><rect x="385.06" y="33.48" width="13.74" height="13.74" rx="2"/><rect x="385.06" y="50.23" width="13.74" height="13.74" rx="2"/><rect x="385.06" y="66.97" width="13.74" height="13.74" rx="2"/><rect x="385.06" y="83.71" width="13.74" height="13.74" rx="2"/><rect x="385.06" y="100.45" width="13.74" height="13.74" rx="2"/><rect x="401.81" y="0.00" width="13.74" height="13.74" rx="2"/><rect x="401.81" y="16.74" width="13.74" height="13.74" rx="2"/><rect x="401.81" y="33.48" width="13.74" height="13.74" rx="2"/><rect x="401.81" y="50.23" width="13.74" height="13.74" rx="2"/><rect x="401.81" y="66.97" width="13.74" height="13.74" rx="2"/><rect x="401.81" y="83.71" width="13.74" height="13.74" rx="2"/><rect x="401.81" y="100.45" width="13.74" height="13.74" rx="2"/><rect x="418.55" y="0.00" width="13.74" height="13.74" rx="2"/><rect x="418.55" y="16.74" width="13.74" height="13.74" rx="2"/><rect x="418.55" y="33.48" width="13.74" height="13.74" rx="2"/><rect x="418.55" y="50.23" width="13.74" height="13.74" rx="2"/><rect x="418.55" y="66.97" width="13.74" height="13.74" rx="2"/><rect x="418.55" y="83.71" width="13.74" height="13.74" rx="2"/><rect x="435.29" y="0.00" width="13.74" height="13.74" rx="2"/><rect x="435.29" y="16.74" width="13.74" height="13.74" rx="2"/><rect x="435.29" y="33.48" width="13.74" height="13.74" rx="2"/><rect x="435.29" y="50.23" width="13.74" height="13.74" rx="2"/><rect x="435.29" y="66.97" width="13.74" height="13.74" rx="2"/><rect x="435.29" y="83.71" width="13.74" height="13.74" rx="2"/><rect x="435.29" y="100.45" width="13.74" height="13.74" rx="2"/><rect x="435.29" y="117.19" width="13.74" height="13.74" rx="2"/><rect x="452.03" y="0.00" width="13.74" height="13.74" rx="2"/><rect x="452.03" y="16.74" width="13.74" height="13.74" rx="2"/><rect x="452.03" y="33.48" width="13.74" height="13.74" rx="2"/><rect x="452.03" y="50.23" width="13.74" height="13.74" rx="2"/><rect x="452.03" y="66.97" width="13.74" height="13.74" rx="2"/><rect x="468.77" y="0.00" width="13.74" height="13.74" rx="2"/><rect x="468.77" y="16.74" width="13.74" height="13.74" rx="2"/><rect x="468.77" y="33.48" width="13.74" height="13.74" rx="2"/><rect x="485.52" y="0.00" width="13.74" height="13.74" rx="2"/><rect x="485.52" y="16.74" width="13.74" height="13.74" rx="2"/><rect x="485.52" y="33.48" width="13.74" height="13.74" rx="2"/><rect x="485.52" y="50.23" width="13.74" height="13.74" rx="2"/><rect x="485.52" y="66.97" width="13.74" height="13.74" rx="2"/><rect x="485.52" y="83.71" width="13.74" height="13.74" rx="2"/><rect x="485.52" y="100.45" width="13.74" height="13.74" rx="2"/><rect x="502.26" y="0.00" width="13.74" height="13.74" rx="2"/><rect x="502.26" y="16.74" width="13.74" height="13.74" rx="2"/><rect x="502.26" y="33.48" width="13.74" height="13.74" rx="2"/><rect x="502.26" y="50.23" width="13.74" height="13.74" rx="2"/><rect x="502.26" y="66.97" width="13.74" height="13.74" rx="2"/><rect x="502.26" y="83.71" width="13.74" height="13.74" rx="2"/><rect x="502.26" y="100.45" width="13.74" height="13.74" rx="2"/><rect x="502.26" y="117.19" width="13.74" height="13.74" rx="2"/><rect x="502.26" y="133.94" width="13.74" height="13.74" rx="2"/><rect x="502.26" y="150.68" width="13.74" height="13.74" rx="2"/><rect x="502.26" y="167.42" width="13.74" height="13.74" rx="2"/><rect x="502.26" y="184.16" width="13.74" height="13.74" rx="2"/><rect x="502.26" y="200.90" width="13.74" height="13.74" rx="2"/><rect x="502.26" y="217.65" width="13.74" height="13.74" rx="2"/></g><g fill="#7a35b2"><rect x="0.00" y="167.42" width="13.74" height="13.74" rx="2"/><rect x="16.74" y="150.68" width="13.74" height="13.74" rx="2"/><rect x="16.74" y="167.42" width="13.74" height="13.74" rx="2"/><rect x="33.48" y="66.97" width="13.74" height="13.74" rx="2"/><rect x="33.48" y="83.71" width="13.74" height="13.74" rx="2"/><rect x="33.48" y="100.45" width="13.74" height="13.74" rx="2"/><rect x="33.48" y="117.19" width="13.74" height="13.74" rx="2"/><rect x="50.23" y="100.45" width="13.74" height="13.74" rx="2"/><rect x="50.23" y="117.19" width="13.74" height="13.74" rx="2"/><rect x="50.23" y="133.94" width="13.74" height="13.74" rx="2"/><rect x="66.97" y="0.00" width="13.74" height="13.74" rx="2"/><rect x="66.97" y="16.74" width="13.74" height="13.74" rx="2"/><rect x="66.97" y="33.48" width="13.74" height="13.74" rx="2"/><rect x="66.97" y="50.23" width="13.74" height="13.74" rx="2"/><rect x="66.97" y="66.97" width="13.74" height="13.74" rx="2"/><rect x="83.71" y="66.97" width="13.74" height="13.74" rx="2"/><rect x="83.71" y="83.71" width="13.74" height="13.74" rx="2"/><rect x="83.71" y="100.45" width="13.74" height="13.74" rx="2"/><rect x="83.71" y="117.19" width="13.74" height="13.74" rx="2"/><rect x="100.45" y="133.94" width="13.74" height="13.74" rx="2"/><rect x="100.45" y="150.68" width="13.74" height="13.74" rx="2"/><rect x="117.19" y="33.48" width="13.74" height="13.74" rx="2"/><rect x="117.19" y="50.23" width="13.74" height="13.74" rx="2"/><rect x="117.19" y="66.97" width="13.74" height="13.74" rx="2"/><rect x="117.19" y="83.71" width="13.74" height="13.74" rx="2"/><rect x="117.19" y="100.45" width="13.74" height="13.74" rx="2"/><rect x="133.94" y="133.94" width="13.74" height="13.74" rx="2"/><rect x="133.94" y="150.68" width="13.74" height="13.74" rx="2"/><rect x="150.68" y="100.45" width="13.74" height="13.74" rx="2"/><rect x="150.68" y="117.19" width="13.74" height="13.74" rx="2"/><rect x="150.68" y="133.94" width="13.74" height="13.74" rx="2"/><rect x="167.42" y="0.00" width="13.74" height="13.74" rx="2"/><rect x="167.42" y="16.74" width="13.74" height="13.74" rx="2"/><rect x="167.42" y="33.48" width="13.74" height="13.74" rx="2"/><rect x="167.42" y="50.23" width="13.74" height="13.74" rx="2"/><rect x="167.42" y="66.97" width="13.74" height="13.74" rx="2"/><rect x="167.42" y="83.71" width="13.74" height="13.74" rx="2"/><rect x="184.16" y="100.45" width="13.74" height="13.74" rx="2"/><rect x="184.16" y="117.19" width="13.74" height="13.74" rx="2"/><rect x="184.16" y="133.94" width="13.74" height="13.74" rx="2"/><rect x="200.90" y="83.71" width="13.74" height="13.74" rx="2"/><rect x="200.90" y="100.45" width="13.74" height="13.74" rx="2"/><rect x="200.90" y="117.19" width="13.74" height="13.74" rx="2"/><rect x="217.65" y="83.71" width="13.74" height="13.74" rx="2"/><rect x="217.65" y="100.45" width="13.74" height="13.74" rx="2"/><rect x="217.65" y="117.19" width="13.74" height="13.74" rx="2"/><rect x="234.39" y="83.71" width="13.74" height="13.74" rx="2"/><rect x="234.39" y="100.45" width="13.74" height="13.74" rx="2"/><rect x="234.39" y="117.19" width="13.74" height="13.74" rx="2"/><rect x="251.13" y="100.45" width="13.74" height="13.74" rx="2"/><rect x="251.13" y="117.19" width="13.74" height="13.74" rx="2"/><rect x="251.13" y="133.94" width="13.74" height="13.74" rx="2"/><rect x="267.87" y="33.48" width="13.74" height="13.74" rx="2"/><rect x="267.87" y="50.23" width="13.74" height="13.74" rx="2"/><rect x="267.87" y="66.97" width="13.74" height="13.74" rx="2"/><rect x="267.87" y="83.71" width="13.74" height="13.74" rx="2"/><rect x="267.87" y="100.45" width="13.74" height="13.74" rx="2"/><rect x="284.61" y="83.71" width="13.74" height="13.74" rx="2"/><rect x="284.61" y="100.45" width="13.74" height="13.74" rx="2"/><rect x="284.61" y="117.19" width="13.74" height="13.74" rx="2"/><rect x="301.35" y="150.68" width="13.74" height="13.74" rx="2"/><rect x="301.35" y="167.42" width="13.74" height="13.74" rx="2"/><rect x="318.10" y="100.45" width="13.74" height="13.74" rx="2"/><rect x="318.10" y="117.19" width="13.74" height="13.74" rx="2"/><rect x="334.84" y="83.71" width="13.74" height="13.74" rx="2"/><rect x="334.84" y="100.45" width="13.74" height="13.74" rx="2"/><rect x="334.84" y="117.19" width="13.74" height="13.74" rx="2"/><rect x="351.58" y="83.71" width="13.74" height="13.74" rx="2"/><rect x="351.58" y="100.45" width="13.74" height="13.74" rx="2"/><rect x="351.58" y="117.19" width="13.74" height="13.74" rx="2"/><rect x="368.32" y="66.97" width="13.74" height="13.74" rx="2"/><rect x="368.32" y="83.71" width="13.74" height="13.74" rx="2"/><rect x="368.32" y="100.45" width="13.74" height="13.74" rx="2"/><rect x="368.32" y="117.19" width="13.74" height="13.74" rx="2"/><rect x="385.06" y="117.19" width="13.74" height="13.74" rx="2"/><rect x="385.06" y="133.94" width="13.74" height="13.74" rx="2"/><rect x="401.81" y="117.19" width="13.74" height="13.74" rx="2"/><rect x="401.81" y="133.94" width="13.74" height="13.74" rx="2"/><rect x="418.55" y="100.45" width="13.74" height="13.74" rx="2"/><rect x="418.55" y="117.19" width="13.74" height="13.74" rx="2"/><rect x="418.55" y="133.94" width="13.74" height="13.74" rx="2"/><rect x="435.29" y="133.94" width="13.74" height="13.74" rx="2"/><rect x="435.29" y="150.68" width="13.74" height="13.74" rx="2"/><rect x="452.03" y="83.71" width="13.74" height="13.74" rx="2"/><rect x="452.03" y="100.45" width="13.74" height="13.74" rx="2"/><rect x="452.03" y="117.19" width="13.74" height="13.74" rx="2"/><rect x="468.77" y="50.23" width="13.74" height="13.74" rx="2"/><rect x="468.77" y="66.97" width="13.74" height="13.74" rx="2"/><rect x="468.77" y="83.71" width="13.74" height="13.74" rx="2"/><rect x="468.77" y="100.45" width="13.74" height="13.74" rx="2"/><rect x="485.52" y="117.19" width="13.74" height="13.74" rx="2"/><rect x="485.52" y="133.94" width="13.74" height="13.74" rx="2"/><rect x="485.52" y="150.68" width="13.74" height="13.74" rx="2"/></g><g fill="#c87d00"><rect x="0.00" y="184.16" width="13.74" height="13.74" rx="2"/><rect x="16.74" y="184.16" width="13.74" height="13.74" rx="2"/><rect x="33.48" y="133.94" width="13.74" height="13.74" rx="2"/><rect x="50.23" y="150.68" width="13.74" height="13.74" rx="2"/><rect x="50.23" y="167.42" width="13.74" height="13.74" rx="2"/><rect x="66.97" y="83.71" width="13.74" height="13.74" rx="2"/><rect x="66.97" y="100.45" width="13.74" height="13.74" rx="2"/><rect x="66.97" y="117.19" width="13.74" height="13.74" rx="2"/><rect x="83.71" y="133.94" width="13.74" height="13.74" rx="2"/><rect x="83.71" y="150.68" width="13.74" height="13.74" rx="2"/><rect x="100.45" y="167.42" width="13.74" height="13.74" rx="2"/><rect x="100.45" y="184.16" width="13.74" height="13.74" rx="2"/><rect x="117.19" y="117.19" width="13.74" height="13.74" rx="2"/><rect x="117.19" y="133.94" width="13.74" height="13.74" rx="2"/><rect x="133.94" y="167.42" width="13.74" height="13.74" rx="2"/><rect x="150.68" y="150.68" width="13.74" height="13.74" rx="2"/><rect x="167.42" y="100.45" width="13.74" height="13.74" rx="2"/><rect x="167.42" y="117.19" width="13.74" height="13.74" rx="2"/><rect x="184.16" y="150.68" width="13.74" height="13.74" rx="2"/><rect x="200.90" y="133.94" width="13.74" height="13.74" rx="2"/><rect x="200.90" y="150.68" width="13.74" height="13.74" rx="2"/><rect x="217.65" y="133.94" width="13.74" height="13.74" rx="2"/><rect x="217.65" y="150.68" width="13.74" height="13.74" rx="2"/><rect x="234.39" y="133.94" width="13.74" height="13.74" rx="2"/><rect x="234.39" y="150.68" width="13.74" height="13.74" rx="2"/><rect x="251.13" y="150.68" width="13.74" height="13.74" rx="2"/><rect x="251.13" y="167.42" width="13.74" height="13.74" rx="2"/><rect x="267.87" y="117.19" width="13.74" height="13.74" rx="2"/><rect x="267.87" y="133.94" width="13.74" height="13.74" rx="2"/><rect x="284.61" y="133.94" width="13.74" height="13.74" rx="2"/><rect x="284.61" y="150.68" width="13.74" height="13.74" rx="2"/><rect x="301.35" y="184.16" width="13.74" height="13.74" rx="2"/><rect x="318.10" y="133.94" width="13.74" height="13.74" rx="2"/><rect x="318.10" y="150.68" width="13.74" height="13.74" rx="2"/><rect x="334.84" y="133.94" width="13.74" height="13.74" rx="2"/><rect x="334.84" y="150.68" width="13.74" height="13.74" rx="2"/><rect x="351.58" y="133.94" width="13.74" height="13.74" rx="2"/><rect x="351.58" y="150.68" width="13.74" height="13.74" rx="2"/><rect x="368.32" y="133.94" width="13.74" height="13.74" rx="2"/><rect x="368.32" y="150.68" width="13.74" height="13.74" rx="2"/><rect x="385.06" y="150.68" width="13.74" height="13.74" rx="2"/><rect x="385.06" y="167.42" width="13.74" height="13.74" rx="2"/><rect x="401.81" y="150.68" width="13.74" height="13.74" rx="2"/><rect x="418.55" y="150.68" width="13.74" height="13.74" rx="2"/><rect x="418.55" y="167.42" width="13.74" height="13.74" rx="2"/><rect x="435.29" y="167.42" width="13.74" height="13.74" rx="2"/><rect x="452.03" y="133.94" width="13.74" height="13.74" rx="2"/><rect x="452.03" y="150.68" width="13.74" height="13.74" rx="2"/><rect x="468.77" y="117.19" width="13.74" height="13.74" rx="2"/><rect x="468.77" y="133.94" width="13.74" height="13.74" rx="2"/><rect x="485.52" y="167.42" width="13.74" height="13.74" rx="2"/></g><g fill="#009e6d"><rect x="0.00" y="200.90" width="13.74" height="13.74" rx="2"/><rect x="16.74" y="200.90" width="13.74" height="13.74" rx="2"/><rect x="33.48" y="150.68" width="13.74" height="13.74" rx="2"/><rect x="33.48" y="167.42" width="13.74" height="13.74" rx="2"/><rect x="50.23" y="184.16" width="13.74" height="13.74" rx="2"/><rect x="66.97" y="133.94" width="13.74" height="13.74" rx="2"/><rect x="66.97" y="150.68" width="13.74" height="13.74" rx="2"/><rect x="83.71" y="167.42" width="13.74" height="13.74" rx="2"/><rect x="100.45" y="200.90" width="13.74" height="13.74" rx="2"/><rect x="117.19" y="150.68" width="13.74" height="13.74" rx="2"/><rect x="117.19" y="167.42" width="13.74" height="13.74" rx="2"/><rect x="133.94" y="184.16" width="13.74" height="13.74" rx="2"/><rect x="150.68" y="167.42" width="13.74" height="13.74" rx="2"/><rect x="150.68" y="184.16" width="13.74" height="13.74" rx="2"/><rect x="167.42" y="133.94" width="13.74" height="13.74" rx="2"/><rect x="184.16" y="167.42" width="13.74" height="13.74" rx="2"/><rect x="200.90" y="167.42" width="13.74" height="13.74" rx="2"/><rect x="200.90" y="184.16" width="13.74" height="13.74" rx="2"/><rect x="217.65" y="167.42" width="13.74" height="13.74" rx="2"/><rect x="217.65" y="184.16" width="13.74" height="13.74" rx="2"/><rect x="234.39" y="167.42" width="13.74" height="13.74" rx="2"/><rect x="251.13" y="184.16" width="13.74" height="13.74" rx="2"/><rect x="267.87" y="150.68" width="13.74" height="13.74" rx="2"/><rect x="267.87" y="167.42" width="13.74" height="13.74" rx="2"/><rect x="284.61" y="167.42" width="13.74" height="13.74" rx="2"/><rect x="301.35" y="200.90" width="13.74" height="13.74" rx="2"/><rect x="318.10" y="167.42" width="13.74" height="13.74" rx="2"/><rect x="334.84" y="167.42" width="13.74" height="13.74" rx="2"/><rect x="351.58" y="167.42" width="13.74" height="13.74" rx="2"/><rect x="351.58" y="184.16" width="13.74" height="13.74" rx="2"/><rect x="368.32" y="167.42" width="13.74" height="13.74" rx="2"/><rect x="385.06" y="184.16" width="13.74" height="13.74" rx="2"/><rect x="401.81" y="167.42" width="13.74" height="13.74" rx="2"/><rect x="401.81" y="184.16" width="13.74" height="13.74" rx="2"/><rect x="418.55" y="184.16" width="13.74" height="13.74" rx="2"/><rect x="435.29" y="184.16" width="13.74" height="13.74" rx="2"/><rect x="452.03" y="167.42" width="13.74" height="13.74" rx="2"/><rect x="468.77" y="150.68" width="13.74" height="13.74" rx="2"/><rect x="468.77" y="167.42" width="13.74" height="13.74" rx="2"/><rect x="485.52" y="184.16" width="13.74" height="13.74" rx="2"/></g><g fill="#1c3fc0"><rect x="0.00" y="217.65" width="13.74" height="13.74" rx="2"/><rect x="16.74" y="217.65" width="13.74" height="13.74" rx="2"/><rect x="33.48" y="184.16" width="13.74" height="13.74" rx="2"/><rect x="33.48" y="200.90" width="13.74" height="13.74" rx="2"/><rect x="33.48" y="217.65" width="13.74" height="13.74" rx="2"/><rect x="50.23" y="200.90" width="13.74" height="13.74" rx="2"/><rect x="50.23" y="217.65" width="13.74" height="13.74" rx="2"/><rect x="66.97" y="167.42" width="13.74" height="13.74" rx="2"/><rect x="66.97" y="184.16" width="13.74" height="13.74" rx="2"/><rect x="66.97" y="200.90" width="13.74" height="13.74" rx="2"/><rect x="66.97" y="217.65" width="13.74" height="13.74" rx="2"/><rect x="83.71" y="184.16" width="13.74" height="13.74" rx="2"/><rect x="83.71" y="200.90" width="13.74" height="13.74" rx="2"/><rect x="83.71" y="217.65" width="13.74" height="13.74" rx="2"/><rect x="100.45" y="217.65" width="13.74" height="13.74" rx="2"/><rect x="117.19" y="184.16" width="13.74" height="13.74" rx="2"/><rect x="117.19" y="200.90" width="13.74" height="13.74" rx="2"/><rect x="117.19" y="217.65" width="13.74" height="13.74" rx="2"/><rect x="133.94" y="200.90" width="13.74" height="13.74" rx="2"/><rect x="133.94" y="217.65" width="13.74" height="13.74" rx="2"/><rect x="150.68" y="200.90" width="13.74" height="13.74" rx="2"/><rect x="150.68" y="217.65" width="13.74" height="13.74" rx="2"/><rect x="167.42" y="150.68" width="13.74" height="13.74" rx="2"/><rect x="167.42" y="167.42" width="13.74" height="13.74" rx="2"/><rect x="167.42" y="184.16" width="13.74" height="13.74" rx="2"/><rect x="167.42" y="200.90" width="13.74" height="13.74" rx="2"/><rect x="167.42" y="217.65" width="13.74" height="13.74" rx="2"/><rect x="184.16" y="184.16" width="13.74" height="13.74" rx="2"/><rect x="184.16" y="200.90" width="13.74" height="13.74" rx="2"/><rect x="184.16" y="217.65" width="13.74" height="13.74" rx="2"/><rect x="200.90" y="200.90" width="13.74" height="13.74" rx="2"/><rect x="200.90" y="217.65" width="13.74" height="13.74" rx="2"/><rect x="217.65" y="200.90" width="13.74" height="13.74" rx="2"/><rect x="217.65" y="217.65" width="13.74" height="13.74" rx="2"/><rect x="234.39" y="184.16" width="13.74" height="13.74" rx="2"/><rect x="234.39" y="200.90" width="13.74" height="13.74" rx="2"/><rect x="234.39" y="217.65" width="13.74" height="13.74" rx="2"/><rect x="251.13" y="200.90" width="13.74" height="13.74" rx="2"/><rect x="251.13" y="217.65" width="13.74" height="13.74" rx="2"/><rect x="267.87" y="184.16" width="13.74" height="13.74" rx="2"/><rect x="267.87" y="200.90" width="13.74" height="13.74" rx="2"/><rect x="267.87" y="217.65" width="13.74" height="13.74" rx="2"/><rect x="284.61" y="184.16" width="13.74" height="13.74" rx="2"/><rect x="284.61" y="200.90" width="13.74" height="13.74" rx="2"/><rect x="284.61" y="217.65" width="13.74" height="13.74" rx="2"/><rect x="301.35" y="217.65" width="13.74" height="13.74" rx="2"/><rect x="318.10" y="184.16" width="13.74" height="13.74" rx="2"/><rect x="318.10" y="200.90" width="13.74" height="13.74" rx="2"/><rect x="318.10" y="217.65" width="13.74" height="13.74" rx="2"/><rect x="334.84" y="184.16" width="13.74" height="13.74" rx="2"/><rect x="334.84" y="200.90" width="13.74" height="13.74" rx="2"/><rect x="334.84" y="217.65" width="13.74" height="13.74" rx="2"/><rect x="351.58" y="200.90" width="13.74" height="13.74" rx="2"/><rect x="351.58" y="217.65" width="13.74" height="13.74" rx="2"/><rect x="368.32" y="184.16" width="13.74" height="13.74" rx="2"/><rect x="368.32" y="200.90" width="13.74" height="13.74" rx="2"/><rect x="368.32" y="217.65" width="13.74" height="13.74" rx="2"/><rect x="385.06" y="200.90" width="13.74" height="13.74" rx="2"/><rect x="385.06" y="217.65" width="13.74" height="13.74" rx="2"/><rect x="401.81" y="200.90" width="13.74" height="13.74" rx="2"/><rect x="401.81" y="217.65" width="13.74" height="13.74" rx="2"/><rect x="418.55" y="200.90" width="13.74" height="13.74" rx="2"/><rect x="418.55" y="217.65" width="13.74" height="13.74" rx="2"/><rect x="435.29" y="200.90" width="13.74" height="13.74" rx="2"/><rect x="435.29" y="217.65" width="13.74" height="13.74" rx="2"/><rect x="452.03" y="184.16" width="13.74" height="13.74" rx="2"/><rect x="452.03" y="200.90" width="13.74" height="13.74" rx="2"/><rect x="452.03" y="217.65" width="13.74" height="13.74" rx="2"/><rect x="468.77" y="184.16" width="13.74" height="13.74" rx="2"/><rect x="468.77" y="200.90" width="13.74" height="13.74" rx="2"/><rect x="468.77" y="217.65" width="13.74" height="13.74" rx="2"/><rect x="485.52" y="200.90" width="13.74" height="13.74" rx="2"/><rect x="485.52" y="217.65" width="13.74" height="13.74" rx="2"/></g></svg><div class="t c" style="left:24.10px;top:326.20px;font-size:12px;letter-spacing:-0.320px;color:#a1a1a1;-webkit-text-stroke:0.15px #a1a1a1;">Feb 10</div><div class="t c" style="left:119.25px;top:326.20px;font-size:12px;letter-spacing:-0.250px;color:#a1a1a1;-webkit-text-stroke:0.15px #a1a1a1;">Feb 16</div><div class="t c" style="left:214.75px;top:326.20px;font-size:12px;letter-spacing:0.330px;color:#a1a1a1;-webkit-text-stroke:0.15px #a1a1a1;">Feb 22</div><div class="t c" style="left:312.90px;top:326.20px;font-size:12px;letter-spacing:0.320px;color:#a1a1a1;-webkit-text-stroke:0.15px #a1a1a1;">Feb 28</div><div class="t c" style="left:411.00px;top:326.20px;font-size:12px;letter-spacing:0.450px;color:#a1a1a1;-webkit-text-stroke:0.15px #a1a1a1;">Mar 6</div><div class="t c" style="left:503.05px;top:326.20px;font-size:12px;letter-spacing:-0.060px;color:#a1a1a1;-webkit-text-stroke:0.15px #a1a1a1;">Mar 12</div></div><div class="card" style="left:426.5px;top:596px;width:564px;height:360px"><div class="t c" style="left:23.40px;top:28.00px;font-size:16px;letter-spacing:0.780px;-webkit-text-stroke:0.27px #fafafa;">Models</div><div class="abs" style="left:24px;top:56px;width:516px;height:10px;border-radius:5px;overflow:hidden;display:flex"><div style="flex:106 0 0;background:#1c48e6"></div><div style="flex:86 0 0;background:#00bc7d"></div><div style="flex:54 0 0;background:#ad46ff"></div><div style="flex:53 0 0;background:#ff9a00"></div><div style="flex:49 0 0;background:#ff2056"></div><div style="flex:40 0 0;background:#1c48e6"></div><div style="flex:40 0 0;background:#00bc7d"></div></div><div class="dot" style="left:32.0px;top:92.90px;width:10px;height:10px;background:#1c48e6"></div><div class="abs" style="left:50.10px;top:89.90px"><svg class="ic" width="16" height="16" viewBox="0 0 24 24"><path fill="#fafafa" d="M22.2819 9.8211a5.9847 5.9847 0 0 0-.5157-4.9108 6.0462 6.0462 0 0 0-6.5098-2.9A6.0651 6.0651 0 0 0 4.9807 4.1818a5.9847 5.9847 0 0 0-3.9977 2.9 6.0462 6.0462 0 0 0 .7427 7.0966 5.98 5.98 0 0 0 .511 4.9107 6.051 6.051 0 0 0 6.5146 2.9001A5.9847 5.9847 0 0 0 13.2599 24a6.0557 6.0557 0 0 0 5.7718-4.2058 5.9894 5.9894 0 0 0 3.9977-2.9001 6.0557 6.0557 0 0 0-.7475-7.0729zm-9.022 12.6081a4.4755 4.4755 0 0 1-2.8764-1.0408l.1419-.0804 4.7783-2.7582a.7948.7948 0 0 0 .3927-.6813v-6.7369l2.02 1.1686a.071.071 0 0 1 .038.052v5.5826a4.504 4.504 0 0 1-4.4945 4.4944zm-9.6607-4.1254a4.4708 4.4708 0 0 1-.5346-3.0137l.142.0852 4.783 2.7582a.7712.7712 0 0 0 .7806 0l5.8428-3.3685v2.3324a.0804.0804 0 0 1-.0332.0615L9.74 19.9502a4.4992 4.4992 0 0 1-6.1408-1.6464zM2.3408 7.8956a4.485 4.485 0 0 1 2.3655-1.9728V11.6a.7664.7664 0 0 0 .3879.6765l5.8144 3.3543-2.0201 1.1685a.0757.0757 0 0 1-.071 0l-4.8303-2.7865A4.504 4.504 0 0 1 2.3408 7.872zm16.5963 3.8558L13.1038 8.364 15.1192 7.2a.0757.0757 0 0 1 .071 0l4.8303 2.7913a4.4944 4.4944 0 0 1-.6765 8.1042v-5.6772a.79.79 0 0 0-.407-.667zm2.0107-3.0231l-.142-.0852-4.7735-2.7818a.7759.7759 0 0 0-.7854 0L9.409 9.2297V6.8974a.0662.0662 0 0 1 .0284-.0615l4.8303-2.7866a4.4992 4.4992 0 0 1 6.6802 4.66zM8.3065 12.863l-2.02-1.1638a.0804.0804 0 0 1-.038-.0567V6.0742a4.4992 4.4992 0 0 1 7.3757-3.4537l-.142.0805L8.704 5.459a.7948.7948 0 0 0-.3927.6813zm1.0976-2.3654l2.602-1.4998 2.6069 1.4998v2.9994l-2.5974 1.4997-2.6067-1.4997Z"/></svg></div><div class="t c" style="left:73.80px;top:98.20px;font-size:14px;letter-spacing:0.625px;-webkit-text-stroke:0.15px #fafafa;">gpt-5.4</div><div class="t c" style="left:392.65px;top:97.80px;font-size:12px;letter-spacing:0.006px;color:#a1a1a1;-webkit-text-stroke:0.15px #a1a1a1;">106 runs (24.8%) · $30.82</div><div class="dot" style="left:32.0px;top:126.95px;width:10px;height:10px;background:#00bc7d"></div><div class="abs" style="left:50.10px;top:123.95px"><svg class="ic" width="16" height="16" viewBox="0 0 24 24"><path fill="#fafafa" d="M17.3041 3.541h-3.6718l6.696 16.918H24Zm-10.6082 0L0 20.459h3.7442l1.3693-3.5527h7.0052l1.3693 3.5528h3.7442L10.5363 3.5409Zm-.3712 10.2232 2.2914-5.9456 2.2914 5.9456Z"/></svg></div><div class="t c" style="left:73.80px;top:132.25px;font-size:14px;letter-spacing:0.512px;-webkit-text-stroke:0.15px #fafafa;">claude-sonnet-4-6</div><div class="t c" style="left:399.55px;top:131.85px;font-size:12px;letter-spacing:-0.011px;color:#a1a1a1;-webkit-text-stroke:0.15px #a1a1a1;">86 runs (20.1%) · $24.80</div><div class="dot" style="left:32.0px;top:161.00px;width:10px;height:10px;background:#ad46ff"></div><div class="abs" style="left:50.10px;top:158.00px"><svg class="ic" width="16" height="16" viewBox="0 0 24 24"><path fill="#fafafa" d="M22.2819 9.8211a5.9847 5.9847 0 0 0-.5157-4.9108 6.0462 6.0462 0 0 0-6.5098-2.9A6.0651 6.0651 0 0 0 4.9807 4.1818a5.9847 5.9847 0 0 0-3.9977 2.9 6.0462 6.0462 0 0 0 .7427 7.0966 5.98 5.98 0 0 0 .511 4.9107 6.051 6.051 0 0 0 6.5146 2.9001A5.9847 5.9847 0 0 0 13.2599 24a6.0557 6.0557 0 0 0 5.7718-4.2058 5.9894 5.9894 0 0 0 3.9977-2.9001 6.0557 6.0557 0 0 0-.7475-7.0729zm-9.022 12.6081a4.4755 4.4755 0 0 1-2.8764-1.0408l.1419-.0804 4.7783-2.7582a.7948.7948 0 0 0 .3927-.6813v-6.7369l2.02 1.1686a.071.071 0 0 1 .038.052v5.5826a4.504 4.504 0 0 1-4.4945 4.4944zm-9.6607-4.1254a4.4708 4.4708 0 0 1-.5346-3.0137l.142.0852 4.783 2.7582a.7712.7712 0 0 0 .7806 0l5.8428-3.3685v2.3324a.0804.0804 0 0 1-.0332.0615L9.74 19.9502a4.4992 4.4992 0 0 1-6.1408-1.6464zM2.3408 7.8956a4.485 4.485 0 0 1 2.3655-1.9728V11.6a.7664.7664 0 0 0 .3879.6765l5.8144 3.3543-2.0201 1.1685a.0757.0757 0 0 1-.071 0l-4.8303-2.7865A4.504 4.504 0 0 1 2.3408 7.872zm16.5963 3.8558L13.1038 8.364 15.1192 7.2a.0757.0757 0 0 1 .071 0l4.8303 2.7913a4.4944 4.4944 0 0 1-.6765 8.1042v-5.6772a.79.79 0 0 0-.407-.667zm2.0107-3.0231l-.142-.0852-4.7735-2.7818a.7759.7759 0 0 0-.7854 0L9.409 9.2297V6.8974a.0662.0662 0 0 1 .0284-.0615l4.8303-2.7866a4.4992 4.4992 0 0 1 6.6802 4.66zM8.3065 12.863l-2.02-1.1638a.0804.0804 0 0 1-.038-.0567V6.0742a4.4992 4.4992 0 0 1 7.3757-3.4537l-.142.0805L8.704 5.459a.7948.7948 0 0 0-.3927.6813zm1.0976-2.3654l2.602-1.4998 2.6069 1.4998v2.9994l-2.5974 1.4997-2.6067-1.4997Z"/></svg></div><div class="t c" style="left:73.80px;top:166.30px;font-size:14px;letter-spacing:0.442px;-webkit-text-stroke:0.15px #fafafa;">gpt-5.3-codex-spark</div><div class="t c" style="left:406.95px;top:165.90px;font-size:12px;letter-spacing:-0.064px;color:#a1a1a1;-webkit-text-stroke:0.15px #a1a1a1;">54 runs (12.6%) · $1.27</div><div class="dot" style="left:32.0px;top:195.05px;width:10px;height:10px;background:#ff9a00"></div><div class="abs" style="left:50.10px;top:192.05px"><svg class="ic" width="16" height="16" viewBox="0 0 24 24"><defs><linearGradient id="gm" x1="0" y1="0" x2="0" y2="1"><stop offset="0" stop-color="#9a4fe6"/><stop offset="0.62" stop-color="#9354dc"/><stop offset="0.9" stop-color="#8c8c96"/></linearGradient></defs><path fill="url(#gm)" d="M12 0C12.500 7 17 11.500 24 12 17 12.500 12.500 17 12 24 11.500 17 7 12.500 0 12 7 11.500 11.500 7 12 0Z"/></svg></div><div class="t c" style="left:73.80px;top:200.35px;font-size:14px;letter-spacing:0.503px;-webkit-text-stroke:0.15px #fafafa;">gemini-3.0-flash</div><div class="t c" style="left:407.15px;top:199.95px;font-size:12px;letter-spacing:-0.073px;color:#a1a1a1;-webkit-text-stroke:0.15px #a1a1a1;">53 runs (12.4%) · $0.17</div><div class="dot" style="left:32.0px;top:229.10px;width:10px;height:10px;background:#ff2056"></div><div class="abs" style="left:50.10px;top:226.10px"><svg class="ic" width="16" height="16" viewBox="0 0 24 24"><path fill="#fafafa" d="M17.3041 3.541h-3.6718l6.696 16.918H24Zm-10.6082 0L0 20.459h3.7442l1.3693-3.5527h7.0052l1.3693 3.5528h3.7442L10.5363 3.5409Zm-.3712 10.2232 2.2914-5.9456 2.2914 5.9456Z"/></svg></div><div class="t c" style="left:73.80px;top:234.40px;font-size:14px;letter-spacing:0.568px;-webkit-text-stroke:0.15px #fafafa;">claude-opus-4-6</div><div class="t c" style="left:400.20px;top:234.00px;font-size:12px;letter-spacing:-0.007px;color:#a1a1a1;-webkit-text-stroke:0.15px #a1a1a1;">49 runs (11.4%) · $25.86</div><div class="dot" style="left:32.0px;top:263.15px;width:10px;height:10px;background:#1c48e6"></div><div class="abs" style="left:50.10px;top:260.15px"><svg class="ic" width="16" height="16" viewBox="0 0 24 24"><path fill="#fafafa" d="M2.500 3.700h3.500v6.900l6.200-6.900h4.400l-6.500 7.200 3.600 5.900h3.600v3.700h-5.400l-4.300-6.800-1.600 1.800v5H2.500Z"/><circle cx="21.600" cy="2.100" r="2" fill="#1c48e6"/></svg></div><div class="t c" style="left:73.55px;top:268.45px;font-size:14px;letter-spacing:0.669px;-webkit-text-stroke:0.15px #fafafa;">kimi-k2.5</div><div class="t c" style="left:414.60px;top:268.05px;font-size:12px;letter-spacing:-0.110px;color:#a1a1a1;-webkit-text-stroke:0.15px #a1a1a1;">40 runs (9.3%) · $0.23</div><div class="dot" style="left:32.0px;top:297.20px;width:10px;height:10px;background:#00bc7d"></div><div class="abs" style="left:50.10px;top:294.20px"><svg class="ic" width="16" height="16" viewBox="0 0 24 24"><rect x="0.200" y="0.200" width="23.600" height="23.600" rx="4.800" fill="#fafafa"/><path fill="#161616" d="M5.900 4.300h14.400l-1.900 2.900H5.900ZM14.300 4.300h6L9.600 19.600H3.400ZM11.700 17h8.600v2.600h-10.400Z"/></svg></div><div class="t c" style="left:73.80px;top:302.50px;font-size:14px;letter-spacing:1.025px;-webkit-text-stroke:0.15px #fafafa;">glm-5</div><div class="t c" style="left:414.60px;top:302.10px;font-size:12px;letter-spacing:-0.110px;color:#a1a1a1;-webkit-text-stroke:0.15px #a1a1a1;">40 runs (9.3%) · $0.25</div></div><div class="card" style="left:1014.5px;top:596px;width:564px;height:360px"><div class="t c" style="left:24.05px;top:32.20px;font-size:16px;letter-spacing:0.215px;-webkit-text-stroke:0.27px #fafafa;">Recent Threads</div><div class="t c" style="left:455.85px;top:32.30px;font-size:14px;letter-spacing:0.357px;-webkit-text-stroke:0.22px #fafafa;">View all</div><div class="abs" style="left:518.00px;top:26.20px;"><svg class="ic" width="12" height="12" viewBox="0 0 24 24" fill="none" stroke="currentColor" stroke-width="2" stroke-linecap="round" stroke-linejoin="round" style=""><path d="M5 12h14"/><path d="m12 5 7 7-7 7"/></svg></div><div class="av" style="left:24.0px;top:74px"><div class="abs" style="left:9.00px;top:9.10px;color:#9c9c9c;"><svg class="ic" width="14" height="14" viewBox="0 0 24 24" fill="none" stroke="currentColor" stroke-width="2" stroke-linecap="round" stroke-linejoin="round" style=""><path d="M2.992 16.342a2 2 0 0 1 .094 1.167l-1.065 3.29a1 1 0 0 0 1.236 1.168l3.413-.998a2 2 0 0 1 1.099.092 10 10 0 1 0-4.777-4.719"/></svg></div></div><div class="t c" style="left:67.50px;top:82.60px;font-size:14px;letter-spacing:0.160px;-webkit-text-stroke:0.15px #fafafa;">Review SOC 2 evidence checklist for sales demo</div><div class="t c" style="left:68.15px;top:100.20px;font-size:12px;letter-spacing:0.139px;color:#a1a1a1;-webkit-text-stroke:0.15px #a1a1a1;">ella.bennett@seed-promo.local</div><div class="t c" style="left:435.65px;top:90.20px;font-size:12px;letter-spacing:0.047px;color:#a1a1a1;-webkit-text-stroke:0.15px #a1a1a1;">about 10 hours ago</div><div class="av" style="left:24.0px;top:130px"><div class="abs" style="left:9.00px;top:9.10px;color:#9c9c9c;"><svg class="ic" width="14" height="14" viewBox="0 0 24 24" fill="none" stroke="currentColor" stroke-width="2" stroke-linecap="round" stroke-linejoin="round" style=""><path d="M2.992 16.342a2 2 0 0 1 .094 1.167l-1.065 3.29a1 1 0 0 0 1.236 1.168l3.413-.998a2 2 0 0 1 1.099.092 10 10 0 1 0-4.777-4.719"/></svg></div></div><div class="t c" style="left:68.50px;top:138.60px;font-size:14px;letter-spacing:0.269px;-webkit-text-stroke:0.15px #fafafa;">Audit thread title generation for onboarding flow</div><div class="t c" style="left:68.60px;top:156.20px;font-size:12px;letter-spacing:0.084px;color:#a1a1a1;-webkit-text-stroke:0.15px #a1a1a1;">jasmine.reed@seed-promo.local</div><div class="t c" style="left:436.35px;top:146.20px;font-size:12px;letter-spacing:0.006px;color:#a1a1a1;-webkit-text-stroke:0.15px #a1a1a1;">about 14 hours ago</div><div class="av" style="left:24.0px;top:186px"><div class="abs" style="left:9.00px;top:9.10px;color:#9c9c9c;"><svg class="ic" width="14" height="14" viewBox="0 0 24 24" fill="none" stroke="currentColor" stroke-width="2" stroke-linecap="round" stroke-linejoin="round" style=""><path d="M2.992 16.342a2 2 0 0 1 .094 1.167l-1.065 3.29a1 1 0 0 0 1.236 1.168l3.413-.998a2 2 0 0 1 1.099.092 10 10 0 1 0-4.777-4.719"/></svg></div></div><div class="t c" style="left:68.00px;top:194.60px;font-size:14px;letter-spacing:0.205px;-webkit-text-stroke:0.15px #fafafa;">Streamline project settings UX for weekly ops sync</div><div class="t c" style="left:68.25px;top:212.20px;font-size:12px;letter-spacing:0.119px;color:#a1a1a1;-webkit-text-stroke:0.15px #a1a1a1;">zoe.watson@seed-promo.local</div><div class="t c" style="left:437.35px;top:202.20px;font-size:12px;letter-spacing:-0.053px;color:#a1a1a1;-webkit-text-stroke:0.15px #a1a1a1;">about 17 hours ago</div><div class="av" style="left:24.0px;top:242px"><div class="abs" style="left:9.00px;top:9.10px;color:#9c9c9c;"><svg class="ic" width="14" height="14" viewBox="0 0 24 24" fill="none" stroke="currentColor" stroke-width="2" stroke-linecap="round" stroke-linejoin="round" style=""><path d="M2.992 16.342a2 2 0 0 1 .094 1.167l-1.065 3.29a1 1 0 0 0 1.236 1.168l3.413-.998a2 2 0 0 1 1.099.092 10 10 0 1 0-4.777-4.719"/></svg></div></div><div class="t c" style="left:67.50px;top:250.60px;font-size:14px;letter-spacing:0.289px;-webkit-text-stroke:0.15px #fafafa;">Build export flow for run traces for internal docs</div><div class="t c" style="left:68.80px;top:268.20px;font-size:12px;letter-spacing:0.123px;color:#a1a1a1;-webkit-text-stroke:0.15px #a1a1a1;">felix.wood@seed-promo.local</div><div class="t c" style="left:433.05px;top:258.20px;font-size:12px;letter-spacing:0.200px;color:#a1a1a1;-webkit-text-stroke:0.15px #a1a1a1;">about 20 hours ago</div><div class="av" style="left:24.0px;top:298px"><div class="abs" style="left:9.00px;top:9.10px;color:#9c9c9c;"><svg class="ic" width="14" height="14" viewBox="0 0 24 24" fill="none" stroke="currentColor" stroke-width="2" stroke-linecap="round" stroke-linejoin="round" style=""><path d="M2.992 16.342a2 2 0 0 1 .094 1.167l-1.065 3.29a1 1 0 0 0 1.236 1.168l3.413-.998a2 2 0 0 1 1.099.092 10 10 0 1 0-4.777-4.719"/></svg></div></div><div class="t c" style="left:68.00px;top:306.60px;font-size:14px;letter-spacing:0.210px;-webkit-text-stroke:0.15px #fafafa;">Create retention dashboard spec for beta customers</div><div class="t c" style="left:68.80px;top:324.20px;font-size:12px;letter-spacing:0.123px;color:#a1a1a1;-webkit-text-stroke:0.15px #a1a1a1;">felix.wood@seed-promo.local</div><div class="t c" style="left:488.55px;top:314.20px;font-size:12px;letter-spacing:-0.169px;color:#a1a1a1;-webkit-text-stroke:0.15px #a1a1a1;">1 day ago</div></div></div></body></html>
